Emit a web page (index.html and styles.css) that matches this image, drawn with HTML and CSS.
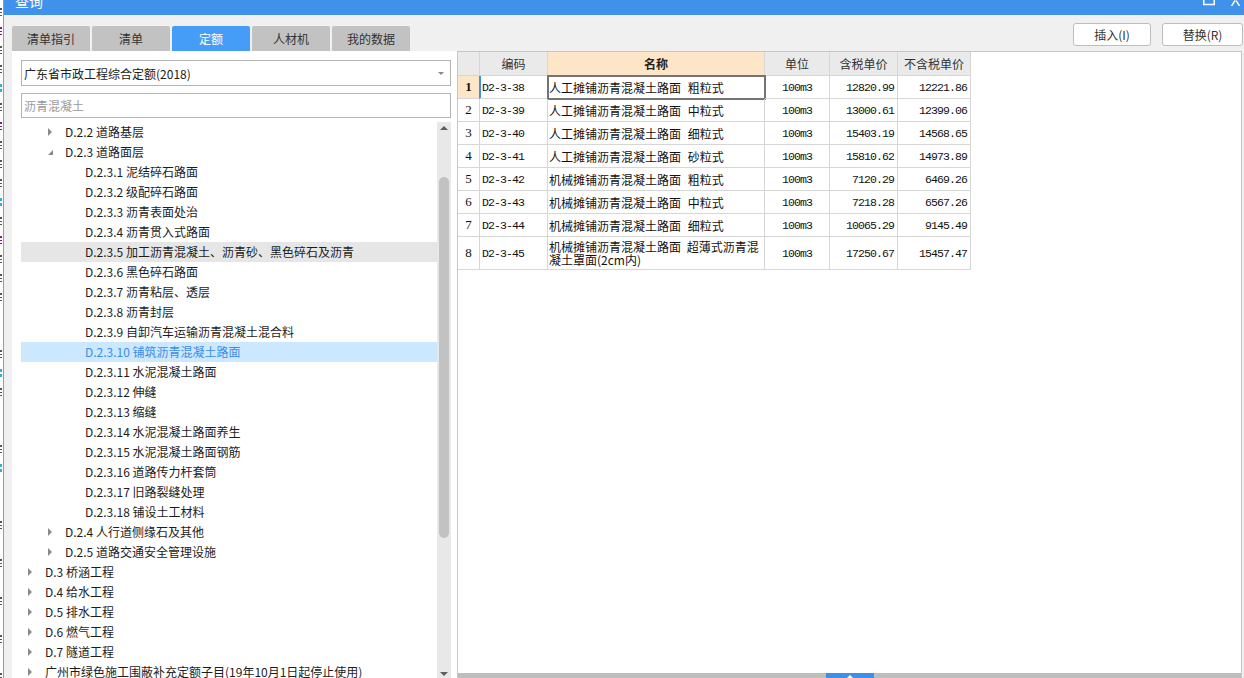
FILE: index.html
```html
<!DOCTYPE html>
<html lang="zh-CN">
<head>
<meta charset="utf-8">
<title>查询</title>
<link rel="stylesheet" href="styles.css">
</head>
<body>
<div class="screen">
  <div class="behind" aria-hidden="true">
    <i class="frag"></i><i class="frag p"></i><i class="frag"></i><i class="frag"></i><i class="frag c"></i><i class="frag"></i><i class="frag p"></i><i class="frag"></i><i class="frag"></i><i class="frag"></i><i class="frag c"></i><i class="frag"></i><i class="frag p"></i><i class="frag"></i><i class="frag"></i><i class="frag"></i><i class="frag gap"></i><i class="frag gap"></i><i class="frag"></i><i class="frag c"></i><i class="frag"></i><i class="frag gap"></i><i class="frag gap"></i><i class="frag"></i><i class="frag c"></i><i class="frag gap"></i><i class="frag gap"></i><i class="frag"></i><i class="frag gap"></i><i class="frag"></i><i class="frag gap"></i><i class="frag"></i><i class="frag gap"></i><i class="frag"></i><i class="frag gap"></i><i class="frag"></i>
  </div>
  <div class="window">
    <div class="titlebar">
      <span class="title">查询</span>
      <div class="win-ctrls">
        <svg class="ctl" width="12" height="6" viewBox="0 0 12 6"><path d="M0.75 0V4.5H11.25V0" fill="none" stroke="#fff" stroke-width="1.5"/></svg>
        <svg class="ctl" width="9" height="6" viewBox="0 0 9 6"><path d="M0.5 6L4 0.5M8.5 6L5 0.5" fill="none" stroke="#fff" stroke-width="1.4"/></svg>
      </div>
    </div>
    <div class="dialog">
      <div class="toolbar">
        <div class="tabs">
          <div class="tab">清单指引</div>
          <div class="tab">清单</div>
          <div class="tab active">定额</div>
          <div class="tab">人材机</div>
          <div class="tab">我的数据</div>
        </div>
        <div class="actions">
          <button class="btn btn-insert">插入(I)</button>
          <button class="btn btn-replace">替换(R)</button>
        </div>
      </div>
      <div class="content">
        <div class="left-panel">
          <div class="select"><span>广东省市政工程综合定额(2018)</span><i class="caret"></i></div>
          <div class="search">沥青混凝土</div>
          <div class="tree">
            <ul class="tree-rows">
              <li class="row lvl2"><span class="tw"><i class="arrow-r"></i></span>D.2.2 道路基层</li>
              <li class="row lvl2"><span class="tw"><i class="arrow-d"></i></span>D.2.3 道路面层</li>
              <li class="row lvl3"><span class="tw"></span>D.2.3.1 泥结碎石路面</li>
              <li class="row lvl3"><span class="tw"></span>D.2.3.2 级配碎石路面</li>
              <li class="row lvl3"><span class="tw"></span>D.2.3.3 沥青表面处治</li>
              <li class="row lvl3"><span class="tw"></span>D.2.3.4 沥青贯入式路面</li>
              <li class="row lvl3 hover"><span class="tw"></span>D.2.3.5 加工沥青混凝土、沥青砂、黑色碎石及沥青</li>
              <li class="row lvl3"><span class="tw"></span>D.2.3.6 黑色碎石路面</li>
              <li class="row lvl3"><span class="tw"></span>D.2.3.7 沥青粘层、透层</li>
              <li class="row lvl3"><span class="tw"></span>D.2.3.8 沥青封层</li>
              <li class="row lvl3"><span class="tw"></span>D.2.3.9 自卸汽车运输沥青混凝土混合料</li>
              <li class="row lvl3 selected"><span class="tw"></span>D.2.3.10 铺筑沥青混凝土路面</li>
              <li class="row lvl3"><span class="tw"></span>D.2.3.11 水泥混凝土路面</li>
              <li class="row lvl3"><span class="tw"></span>D.2.3.12 伸缝</li>
              <li class="row lvl3"><span class="tw"></span>D.2.3.13 缩缝</li>
              <li class="row lvl3"><span class="tw"></span>D.2.3.14 水泥混凝土路面养生</li>
              <li class="row lvl3"><span class="tw"></span>D.2.3.15 水泥混凝土路面钢筋</li>
              <li class="row lvl3"><span class="tw"></span>D.2.3.16 道路传力杆套筒</li>
              <li class="row lvl3"><span class="tw"></span>D.2.3.17 旧路裂缝处理</li>
              <li class="row lvl3"><span class="tw"></span>D.2.3.18 铺设土工材料</li>
              <li class="row lvl2"><span class="tw"><i class="arrow-r"></i></span>D.2.4 人行道侧缘石及其他</li>
              <li class="row lvl2"><span class="tw"><i class="arrow-r"></i></span>D.2.5 道路交通安全管理设施</li>
              <li class="row lvl1"><span class="tw"><i class="arrow-r"></i></span>D.3 桥涵工程</li>
              <li class="row lvl1"><span class="tw"><i class="arrow-r"></i></span>D.4 给水工程</li>
              <li class="row lvl1"><span class="tw"><i class="arrow-r"></i></span>D.5 排水工程</li>
              <li class="row lvl1"><span class="tw"><i class="arrow-r"></i></span>D.6 燃气工程</li>
              <li class="row lvl1"><span class="tw"><i class="arrow-r"></i></span>D.7 隧道工程</li>
              <li class="row lvl1"><span class="tw"><i class="arrow-r"></i></span>广州市绿色施工围蔽补充定额子目(19年10月1日起停止使用)</li>
            </ul>
            <div class="vscroll">
              <div class="sb-btn"><i class="tri-up"></i></div>
              <div class="thumb"></div>
              <div class="sb-btn sb-down"><i class="tri-down"></i></div>
            </div>
          </div>
        </div>
        <div class="right-panel">
          <div class="grid">
            <div class="hc"></div><div class="hc">编码</div><div class="hc hc-name">名称</div><div class="hc">单位</div><div class="hc">含税单价</div><div class="hc">不含税单价</div>

            <div class="c num cur">1</div><div class="c code curcode">D2-3-38</div><div class="c name focus">人工摊铺沥青混凝土路面 粗粒式</div><div class="c unit">100m3</div><div class="c price">12820.99</div><div class="c price">12221.86</div>
            <div class="c num">2</div><div class="c code">D2-3-39</div><div class="c name">人工摊铺沥青混凝土路面 中粒式</div><div class="c unit">100m3</div><div class="c price">13000.61</div><div class="c price">12399.06</div>
            <div class="c num">3</div><div class="c code">D2-3-40</div><div class="c name">人工摊铺沥青混凝土路面 细粒式</div><div class="c unit">100m3</div><div class="c price">15403.19</div><div class="c price">14568.65</div>
            <div class="c num">4</div><div class="c code">D2-3-41</div><div class="c name">人工摊铺沥青混凝土路面 砂粒式</div><div class="c unit">100m3</div><div class="c price">15810.62</div><div class="c price">14973.89</div>
            <div class="c num">5</div><div class="c code">D2-3-42</div><div class="c name">机械摊铺沥青混凝土路面 粗粒式</div><div class="c unit">100m3</div><div class="c price">7120.29</div><div class="c price">6469.26</div>
            <div class="c num">6</div><div class="c code">D2-3-43</div><div class="c name">机械摊铺沥青混凝土路面 中粒式</div><div class="c unit">100m3</div><div class="c price">7218.28</div><div class="c price">6567.26</div>
            <div class="c num">7</div><div class="c code">D2-3-44</div><div class="c name">机械摊铺沥青混凝土路面 细粒式</div><div class="c unit">100m3</div><div class="c price">10065.29</div><div class="c price">9145.49</div>
            <div class="c num">8</div><div class="c code">D2-3-45</div><div class="c name two"><span class="ln">机械摊铺沥青混凝土路面 超薄式沥青混</span><span class="ln">凝土罩面(2cm内)</span></div><div class="c unit">100m3</div><div class="c price">17250.67</div><div class="c price">15457.47</div>
          </div>
          <div class="hsplit"><span class="grip"><i class="grip-tri"></i></span></div>
        </div>
      </div>
    </div>
  </div>
</div>
</body>
</html>
```

FILE: styles.css
```css
* { box-sizing: border-box; }
html, body { margin: 0; padding: 0; }
body {
  width: 1244px;
  height: 678px;
  overflow: hidden;
  background: #f0f0f0;
  font-family: "Noto Sans CJK SC", "Microsoft YaHei", sans-serif;
  font-size: 12px;
  color: #222;
}
.screen { display: flex; height: 678px; }

/* window behind the dialog (only glyph fragments visible) */
.behind {
  width: 3px;
  flex: none;
  overflow: hidden;
  background: #fff;
  padding-top: 8px;
  display: flex;
  flex-direction: column;
  gap: 11px;
}
.frag {
  display: block;
  width: 2px;
  height: 8px;
  flex: none;
  background: linear-gradient(#555 0 2px, transparent 2px 4px, #555 4px 5px, transparent 5px 7px, #555 7px);
}
.frag.p { background: linear-gradient(#7a1f7a 0 2px, transparent 2px 4px, #7a1f7a 4px 5px, transparent 5px 7px, #7a1f7a 7px); }
.frag.c { background: linear-gradient(#2fb3c8 0 3px, transparent 3px 5px, #2fb3c8 5px); }
.frag.gap { background: transparent; }

.window {
  flex: 1;
  min-width: 0;
  display: flex;
  flex-direction: column;
  border-left: 1px solid #9c9c9c;
}

/* title bar */
.titlebar {
  height: 15px;
  flex: none;
  background: #3f91ea;
  display: flex;
  justify-content: space-between;
  overflow: hidden;
  color: #fff;
}
.title {
  font-size: 14px;
  line-height: 14px;
  margin-top: -6px;
  margin-left: 11px;
}
.win-ctrls {
  display: flex;
  align-items: flex-start;
  gap: 16px;
  padding-right: 4px;
}
.ctl { display: block; }

/* dialog */
.dialog {
  flex: 1;
  min-height: 0;
  display: flex;
  flex-direction: column;
  padding: 0 2px 0 8px;
}
.toolbar {
  height: 36px;
  flex: none;
  display: flex;
  justify-content: space-between;
}
.tabs {
  align-self: flex-end;
  display: flex;
  gap: 2px;
}
.tab {
  width: 78px;
  height: 25px;
  line-height: 25px;
  text-align: center;
  background: #c2c2c2;
  color: #333;
  border-radius: 2px 2px 0 0;
  font-size: 12px;
}
.tab.active { background: #459df7; color: #fff; }

.actions {
  margin-top: 8px;
  margin-right: -1px;
  display: flex;
  gap: 11px;
}
.btn {
  height: 23px;
  padding: 0;
  background: #fff;
  border: 1px solid #bdbdbd;
  border-radius: 3px;
  font-family: inherit;
  font-size: 12px;
  color: #333;
}
.btn-insert { width: 78px; }
.btn-replace { width: 81px; }

.content {
  flex: 1;
  min-height: 0;
  display: flex;
}

/* left panel */
.left-panel {
  width: 445px;
  flex: none;
  background: #fff;
  padding: 9px 6px 0 9px;
  display: flex;
  flex-direction: column;
  min-height: 0;
}
.select {
  height: 26px;
  flex: none;
  border: 1px solid #b4b4b4;
  display: flex;
  align-items: center;
  padding: 0 2px;
  color: #222;
}
.caret {
  margin-left: auto;
  margin-right: 4px;
  width: 0;
  height: 0;
  border-top: 3px solid #8a8a8a;
  border-left: 3px solid transparent;
  border-right: 3px solid transparent;
}
.search {
  margin-top: 7px;
  height: 25px;
  flex: none;
  border: 1px solid #b4b4b4;
  padding-left: 2px;
  line-height: 23px;
  color: #9a9a9a;
}
.tree {
  margin-top: 4px;
  flex: 1;
  min-height: 0;
  display: flex;
  overflow: hidden;
}
.tree-rows {
  flex: 1;
  list-style: none;
  margin: 0;
  padding: 0;
  overflow: hidden;
}
.row {
  height: 20px;
  line-height: 20px;
  display: flex;
  align-items: center;
  white-space: nowrap;
  color: #1c1c1c;
}
.lvl1 { padding-left: 7px; }
.lvl2 { padding-left: 27px; }
.lvl3 { padding-left: 47px; }
.row.hover { background: #e6e6e6; }
.row.selected { background: #cce8ff; color: #3a8de6; }
.tw {
  width: 17px;
  flex: none;
  height: 20px;
  display: flex;
  align-items: center;
}
.arrow-r {
  width: 0;
  height: 0;
  border-left: 4px solid #8a8a8a;
  border-top: 4px solid transparent;
  border-bottom: 4px solid transparent;
}
.arrow-d {
  width: 0;
  height: 0;
  margin-top: 1px;
  border-bottom: 5px solid #8a8a8a;
  border-left: 5px solid transparent;
}

.vscroll {
  width: 14px;
  flex: none;
  background: #e8e8e8;
  display: flex;
  flex-direction: column;
  align-items: center;
}
.sb-btn {
  height: 12px;
  width: 100%;
  display: flex;
  justify-content: center;
  align-items: center;
  flex: none;
}
.sb-down { margin-top: auto; align-items: flex-end; padding-bottom: 2px; }
.tri-up {
  width: 0; height: 0;
  border-bottom: 4px solid #5e5e5e;
  border-left: 4px solid transparent;
  border-right: 4px solid transparent;
}
.tri-down {
  width: 0; height: 0;
  border-top: 4px solid #5e5e5e;
  border-left: 4px solid transparent;
  border-right: 4px solid transparent;
}
.thumb {
  margin-top: 43px;
  width: 10px;
  height: 361px;
  flex: none;
  border-radius: 5px;
  background: #c2c2c2;
}

/* right panel */
.right-panel {
  flex: 1;
  min-width: 0;
  background: #fff;
  border: 1px solid #c6c6c6;
  border-bottom: none;
  display: flex;
  flex-direction: column;
}
.grid {
  display: grid;
  grid-template-columns: 22px 68px 217px 65px 68px 73px;
  grid-template-rows: 24px repeat(7, 23px) 33px;
  width: max-content;
}
.grid > div {
  border-right: 1px solid #d6d6d6;
  border-bottom: 1px solid #d6d6d6;
  overflow: hidden;
  display: flex;
  align-items: center;
  white-space: nowrap;
}
.hc {
  background: #eaeaea;
  justify-content: center;
  color: #333;
  font-size: 12px;
}
.hc-name { background: #fde6c8; font-weight: bold; color: #222; }
.c { color: #111; }
.num {
  justify-content: center;
  font-family: "Liberation Serif", serif;
  font-size: 13px;
}
.num.cur { background: #fde6c8; font-weight: bold; border-right-color: #3d8fe9 !important; }
.code, .unit, .price {
  font-family: "Liberation Mono", monospace;
  font-size: 11.5px;
  letter-spacing: -0.9px;
}
.code { padding-left: 2px; }
.curcode { box-shadow: inset 1px 0 0 #3d8fe9; }
.name { padding-left: 1px; font-size: 12px; word-spacing: 4px; }
.grid > .name.two {
  flex-direction: column;
  align-items: flex-start;
  justify-content: center;
  word-spacing: 3px;
}
.ln { display: block; height: 13px; line-height: 13px; }
.focus { outline: 2px solid #747474; outline-offset: -1px; }
.unit { justify-content: center; }
.price { justify-content: flex-end; padding-right: 3px; }

.hsplit {
  margin-top: auto;
  height: 5px;
  flex: none;
  background: #bebebe;
  display: flex;
  justify-content: center;
}
.grip {
  width: 48px;
  background: #3d8fe9;
  display: flex;
  justify-content: center;
  align-items: flex-end;
}
.grip-tri {
  width: 0; height: 0;
  border-bottom: 3px solid #fff;
  border-left: 3px solid transparent;
  border-right: 3px solid transparent;
}
```
